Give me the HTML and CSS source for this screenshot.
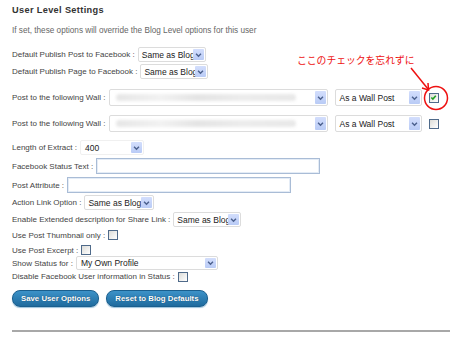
FILE: index.html
```html
<!DOCTYPE html>
<html>
  <head>
    <meta charset="UTF-8">
    <title>User Level Settings</title>
    <link rel="stylesheet" href="styles.css">
  </head>
  <body>
    <div class="page">
      <h3 class="title">User Level Settings</h3>
      <p class="intro">If set, these options will override the Blog Level options for this user</p>

      <div class="row first">
        <label>Default Publish Post to Facebook :</label>
        <span class="select sel-blog"><span class="sel-value">Same as Blog</span><span class="sel-arrow"><svg viewBox="0 0 8 6"><path d="M1.2 1.5 L4 4.3 L6.8 1.5"/></svg></span></span>
      </div>
      <div class="row">
        <label>Default Publish Page to Facebook :</label>
        <span class="select sel-blog"><span class="sel-value">Same as Blog</span><span class="sel-arrow"><svg viewBox="0 0 8 6"><path d="M1.2 1.5 L4 4.3 L6.8 1.5"/></svg></span></span>
      </div>

      <div class="row wall wall-first">
        <label>Post to the following Wall :</label>
        <span class="select sel-wall"><span class="sel-value"><span class="blur"></span></span><span class="sel-arrow"><svg viewBox="0 0 8 6"><path d="M1.2 1.5 L4 4.3 L6.8 1.5"/></svg></span></span>
        <span class="select sel-post"><span class="sel-value">As a Wall Post</span><span class="sel-arrow"><svg viewBox="0 0 8 6"><path d="M1.2 1.5 L4 4.3 L6.8 1.5"/></svg></span></span>
        <span class="check checked"><svg viewBox="0 0 8 8"><path d="M1.5 4 L3.3 5.8 L6.6 2"/></svg></span>
      </div>
      <div class="row wall">
        <label>Post to the following Wall :</label>
        <span class="select sel-wall"><span class="sel-value"><span class="blur"></span></span><span class="sel-arrow"><svg viewBox="0 0 8 6"><path d="M1.2 1.5 L4 4.3 L6.8 1.5"/></svg></span></span>
        <span class="select sel-post"><span class="sel-value">As a Wall Post</span><span class="sel-arrow"><svg viewBox="0 0 8 6"><path d="M1.2 1.5 L4 4.3 L6.8 1.5"/></svg></span></span>
        <span class="check"></span>
      </div>

      <div class="row after-wall">
        <label>Length of Extract :</label>
        <span class="select sel-len flat"><span class="sel-value">400</span><span class="sel-arrow"><svg viewBox="0 0 8 6"><path d="M1.2 1.5 L4 4.3 L6.8 1.5"/></svg></span></span>
      </div>
      <div class="row tall">
        <label>Facebook Status Text :</label>
        <span class="text-input"></span>
      </div>
      <div class="row tall">
        <label>Post Attribute :</label>
        <span class="text-input"></span>
      </div>
      <div class="row">
        <label>Action Link Option :</label>
        <span class="select sel-blog wide"><span class="sel-value">Same as Blog</span><span class="sel-arrow"><svg viewBox="0 0 8 6"><path d="M1.2 1.5 L4 4.3 L6.8 1.5"/></svg></span></span>
      </div>
      <div class="row">
        <label>Enable Extended description for Share Link :</label>
        <span class="select sel-blog"><span class="sel-value">Same as Blog</span><span class="sel-arrow"><svg viewBox="0 0 8 6"><path d="M1.2 1.5 L4 4.3 L6.8 1.5"/></svg></span></span>
      </div>
      <div class="row short thumb">
        <label>Use Post Thumbnail only :</label>
        <span class="check"></span>
      </div>
      <div class="row short excerpt">
        <label>Use Post Excerpt :</label>
        <span class="check"></span>
      </div>
      <div class="row status">
        <label>Show Status for :</label>
        <span class="select sel-status"><span class="sel-value">My Own Profile</span><span class="sel-arrow"><svg viewBox="0 0 8 6"><path d="M1.2 1.5 L4 4.3 L6.8 1.5"/></svg></span></span>
      </div>
      <div class="row short disable">
        <label>Disable Facebook User information in Status :</label>
        <span class="check"></span>
      </div>

      <div class="buttons">
        <button type="button">Save User Options</button>
        <button type="button">Reset to Blog Defaults</button>
      </div>

      <div class="rule"></div>

      <div class="note">ここのチェックを忘れずに</div>
      <svg class="mark" viewBox="0 0 450 338">
        <path d="M411 68 L428 89"/>
        <path d="M422 88 L428.5 90 L428 83"/>
        <circle cx="436" cy="98" r="11.5"/>
      </svg>
    </div>
  </body>
</html>
```

FILE: styles.css
```css
* {
  box-sizing: border-box;
}
body {
  margin: 0;
  background-color: #FFFFFF;
  font-family: "Liberation Sans", Arial, sans-serif;
  color: #444;
}
.page {
  position: relative;
  width: 450px;
  height: 338px;
  padding-left: 12px;
  overflow: hidden;
}
.title {
  margin: 3px 0 0 0;
  font-size: 9.2px;
  line-height: 14px;
  letter-spacing: 0.35px;
  font-weight: bold;
  color: #333;
}
.intro {
  margin: 8px 0 0 0;
  font-size: 8.2px;
  line-height: 12px;
  color: #666;
}
.row {
  display: flex;
  align-items: center;
  height: 15px;
  margin-top: 2px;
  font-size: 8px;
  white-space: nowrap;
}
.row.first {
  margin-top: 10px;
}
.row label {
  margin-right: 3px;
}
.row.wall {
  height: 17px;
  margin-top: 9px;
}
.row.wall-first {
  margin-top: 10px;
}
.row.after-wall {
  margin-top: 8px;
}
.row.tall {
  height: 16px;
  margin-top: 3px;
}
.row.short {
  height: 12px;
}
.row.thumb {
  margin-top: 2px;
}
.row.excerpt {
  margin-top: 3px;
}
.row.status {
  height: 14px;
  margin-top: 0;
}
.row.disable {
  height: 11px;
  margin-top: 1px;
}

/* fake select boxes */
.select {
  display: flex;
  align-items: stretch;
  height: 100%;
  border: 1px solid #dcdcdc;
  border-radius: 2px;
  background-color: #fff;
  padding: 1px;
}
.sel-value {
  flex: 1;
  overflow: hidden;
  padding-left: 3px;
  display: flex;
  align-items: center;
  color: #222;
  font-size: 8.5px;
}
.sel-arrow {
  position: relative;
  width: 11px;
  display: flex;
  align-items: center;
  justify-content: center;
  background: linear-gradient(#d3defc, #b9cbf6);
  border-radius: 1px;
}
.sel-arrow svg {
  width: 7px;
  height: 6px;
  fill: none;
  stroke: #4a5f8c;
  stroke-width: 1.6;
}
.sel-blog {
  width: 68px;
}
.sel-blog.wide {
  width: 70px;
}
.sel-blog .sel-value {
  padding-left: 2px;
  margin-right: -7px;
}
.sel-wall {
  width: 219px;
}
.sel-post {
  width: 87px;
  margin-left: 7px;
}
.sel-len {
  width: 64px;
}
.sel-status {
  width: 142px;
}
.select.flat {
  border-color: #f0f0f0;
}
.blur {
  display: block;
  width: 180px;
  height: 7px;
  margin-left: 2px;
  border-radius: 4px;
  background: linear-gradient(90deg, #e6e6e6, #f2f2f2 25%, #e4e4e4 45%, #ececec 70%, #e8e8e8);
  filter: blur(1.5px);
}

.text-input {
  display: block;
  width: 224px;
  height: 100%;
  border: 1px solid #a9bcd6;
  box-shadow: inset 0 0 0 1px #e4ecf6;
  background-color: #fff;
}

.check {
  display: inline-flex;
  align-items: center;
  justify-content: center;
  width: 10px;
  height: 10px;
  border: 1px solid #4f6a8a;
  background: linear-gradient(135deg, #dcdcd8, #ffffff);
}
.row.wall .check {
  margin-left: 7px;
}
.check svg {
  width: 7px;
  height: 7px;
  fill: none;
  stroke: #20a020;
  stroke-width: 1.8;
}

.buttons {
  display: flex;
  gap: 7px;
  margin-top: 8px;
}
button {
  height: 17px;
  padding: 0 8px;
  border: 1px solid #1a5f8e;
  border-radius: 8px;
  background: linear-gradient(#3c92c8, #1f6b9e);
  color: #fff;
  font-family: "Liberation Sans", Arial, sans-serif;
  font-size: 7.8px;
  font-weight: bold;
  text-shadow: 0 0 1px #0d3a5a;
  box-shadow: 0 1px 1px #9cc2dc;
}

.rule {
  margin-top: 23px;
  height: 2px;
  background-color: #a8a8a8;
}

/* red annotation on top of the form */
.note {
  position: absolute;
  left: 297px;
  top: 53px;
  font-family: "Noto Sans CJK JP", sans-serif;
  font-size: 9.8px;
  line-height: 14px;
  color: #ee1111;
}
.mark {
  position: absolute;
  left: 0;
  top: 0;
  width: 450px;
  height: 338px;
  fill: none;
  stroke: #ee1111;
  stroke-width: 1.5;
}
```
